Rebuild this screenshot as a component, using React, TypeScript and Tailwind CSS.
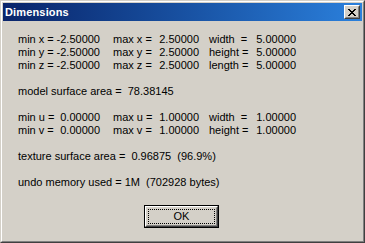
import React from "react";

const font = { fontFamily: '"Liberation Sans", Arial, sans-serif' };

function Row({ cols }: { cols: [string, string][] }) {
  const widths = ["w-[82px] mr-[13px]", "w-[86px] mr-[10px]", "w-[87px]"];
  return (
    <div className="flex h-[13px] leading-[13px]">
      {cols.map(([l, v], i) => (
        <div key={i} className={`flex justify-between whitespace-pre ${widths[i]}`}>
          <span>{l}</span>
          <span>{v}</span>
        </div>
      ))}
    </div>
  );
}

function Line({ children }: { children?: React.ReactNode }) {
  return <div className="h-[13px] leading-[13px] whitespace-pre">{children}</div>;
}

function CloseGlyph() {
  const rows = [
    "11000011",
    "01100110",
    "00111100",
    "00011000",
    "00111100",
    "01100110",
    "11000011",
  ];
  return (
    <svg width="8" height="7" viewBox="0 0 8 7" shapeRendering="crispEdges">
      {rows.flatMap((r, y) =>
        r.split("").map((c, x) =>
          c === "1" ? <rect key={`${x}-${y}`} x={x} y={y} width="1" height="1" fill="#000" /> : null
        )
      )}
    </svg>
  );
}

export default function App() {
  return (
    <div
      className="w-[365px] h-[243px] border border-t-[#d4d0c8] border-l-[#d4d0c8] border-b-[#404040] border-r-[#404040] bg-[#d4d0c8] text-black text-[11px]"
      style={font}
    >
      <div className="w-full h-full border border-t-white border-l-white border-b-[#808080] border-r-[#808080] p-[1px] flex flex-col">
        {/* Title bar */}
        <div className="h-[18px] flex items-center justify-between bg-gradient-to-r from-[#0a246a] to-[#2b80dc] pl-[2px] pr-[2px]">
          <span className="text-white font-bold text-[11px] leading-[18px] tracking-[0.15px]">Dimensions</span>
          <div className="w-[16px] h-[14px] bg-[#d4d0c8] border border-t-white border-l-white border-b-[#404040] border-r-[#404040]">
            <div className="w-full h-full border border-t-[#d4d0c8] border-l-[#d4d0c8] border-b-[#808080] border-r-[#808080] flex items-center justify-center">
              <CloseGlyph />
            </div>
          </div>
        </div>

        {/* Body */}
        <div className="flex flex-col pl-[15px] pt-[12px]">
          <Row cols={[["min x =", "-2.50000"], ["max x =", "2.50000"], ["width  =", "5.00000"]]} />
          <Row cols={[["min y =", "-2.50000"], ["max y =", "2.50000"], ["height =", "5.00000"]]} />
          <Row cols={[["min z =", "-2.50000"], ["max z =", "2.50000"], ["length =", "5.00000"]]} />
          <Line />
          <Line>{"model surface area =  78.38145"}</Line>
          <Line />
          <Row cols={[["min u =", "0.00000"], ["max u =", "1.00000"], ["width  =", "1.00000"]]} />
          <Row cols={[["min v =", "0.00000"], ["max v =", "1.00000"], ["height =", "1.00000"]]} />
          <Line />
          <Line>{"texture surface area =  0.96875  (96.9%)"}</Line>
          <Line />
          <Line>{"undo memory used = 1M  (702928 bytes)"}</Line>

          <div className="mt-[16px] ml-[126px]">
            <div className="w-[75px] h-[23px] border border-black">
              <div className="w-full h-full border border-t-white border-l-white border-b-[#404040] border-r-[#404040]">
                <div className="w-full h-full border border-t-[#d4d0c8] border-l-[#d4d0c8] border-b-[#808080] border-r-[#808080] p-[1px]">
                  <div className="w-full h-full border border-dotted border-black flex items-center justify-center leading-none">
                    OK
                  </div>
                </div>
              </div>
            </div>
          </div>
        </div>
      </div>
    </div>
  );
}
